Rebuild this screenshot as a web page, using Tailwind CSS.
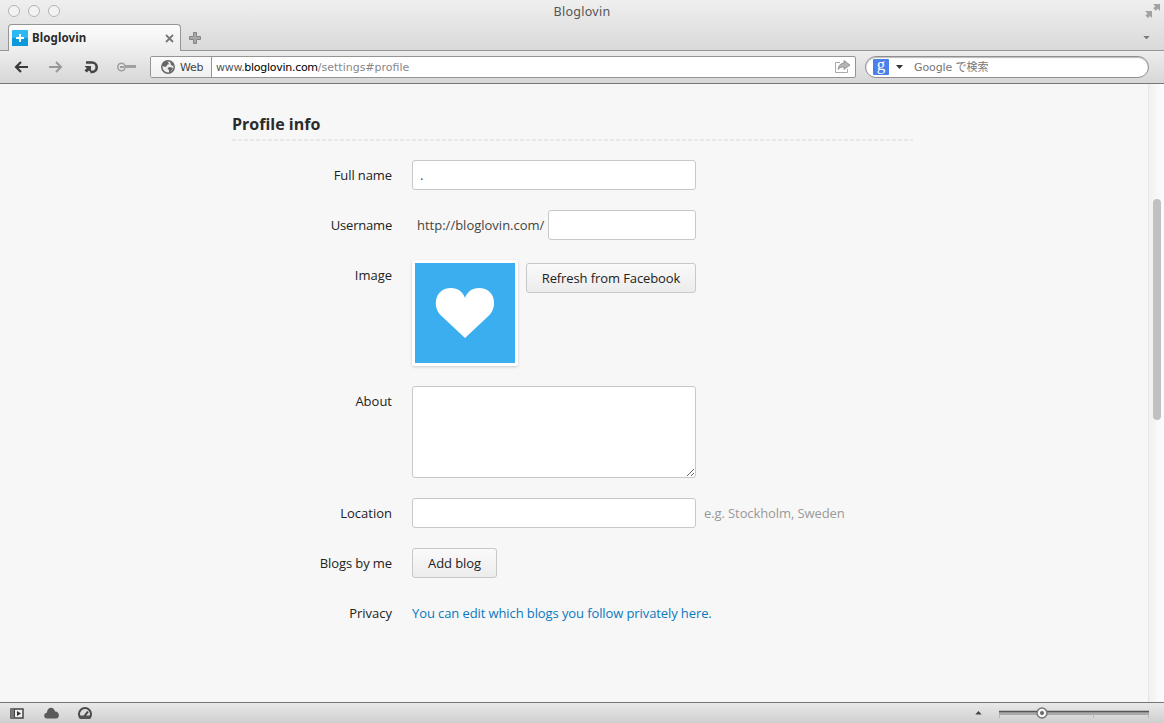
<!DOCTYPE html>
<html lang="en">
<head>
  <meta charset="UTF-8">
  <meta name="viewport" content="width=device-width, initial-scale=1.0">
  <title>Bloglovin</title>
  <script src="https://cdn.jsdelivr.net/npm/@tailwindcss/browser@4"></script>
</head>
<body class="h-screen overflow-hidden flex flex-col bg-[#f7f7f7] font-['Open_Sans',sans-serif] text-[13px] leading-[18px] text-[#222]">

  <!-- Title bar and tabs -->
  <header class="h-[51px] shrink-0 flex flex-col bg-linear-to-b from-[#efefef] to-[#d9d9d9] border-b border-[#969696] font-['DejaVu_Sans','Noto_Sans_CJK_JP',sans-serif] text-[11px]">
    <div class="h-6 shrink-0 flex items-start justify-between">
      <div class="w-24 flex gap-2 pl-2 pt-[5px]">
        <i class="size-3 rounded-full border border-[#b4b4b4] bg-[#f3f3f3]"></i>
        <i class="size-3 rounded-full border border-[#b4b4b4] bg-[#f3f3f3]"></i>
        <i class="size-3 rounded-full border border-[#b4b4b4] bg-[#f3f3f3]"></i>
      </div>
      <div class="pt-[3px] text-[12.500px] tracking-[0.280px] text-[#555] font-['Noto_Sans',sans-serif]">Bloglovin</div>
      <div class="w-24 flex justify-end pr-1 pt-1">
        <svg width="16" height="16" viewBox="0 0 16 16" fill="#a2a2a2"><path d="M9 0h7v7l-2.300-2.300-2 2-2.400-2.400 2-2zM1 7h7v7l-2-2-2 2-2.500-2.500 2-2z"/></svg>
      </div>
    </div>
    <div class="h-[27px] shrink-0 flex">
      <div class="ml-2 h-[27px] w-[173px] flex items-center px-[3px] rounded-t-[4px] border border-b-0 border-[#959595] bg-linear-to-b from-[#fcfcfc] to-[#ededed]">
        <svg width="16" height="16" viewBox="0 0 16 16"><rect width="16" height="16" rx="1" fill="#2cb8f2"/><path d="M0 8h16v8H0z" fill="#0c98dc"/><path d="M8 4v8M4 8h8" stroke="#fff" stroke-width="2"/></svg>
        <span class="ml-1 grow font-bold text-[#2b2b2b] font-['Noto_Sans',sans-serif] text-[11.500px] tracking-[0.100px]">Bloglovin</span>
        <svg class="mr-[3px]" width="9" height="9" viewBox="0 0 9 9" stroke="#777" stroke-width="1.800"><path d="M1 1l7 7M8 1L1 8"/></svg>
      </div>
      <svg class="ml-2 mt-[8px]" width="12" height="12" viewBox="0 0 12 12"><path d="M4.500.5h3v4h4v3h-4v4h-3v-4h-4v-3h4z" fill="#a8a8a8" stroke="#858585"/></svg>
      <svg class="ml-auto mr-3.5 mt-3" width="7" height="4" viewBox="0 0 8 5" fill="#777"><path d="M0 0h8L4 4z"/></svg>
    </div>
  </header>

  <!-- Toolbar -->
  <nav class="h-[33px] shrink-0 flex items-center bg-linear-to-b from-[#ededed] to-[#d7d7d7] border-b border-[#777] font-['DejaVu_Sans','Noto_Sans_CJK_JP',sans-serif] text-[11px] text-[#444]">
    <svg class="ml-3.5" width="15" height="14" viewBox="0 0 15 14" fill="none" stroke="#3a3a3a" stroke-width="2.200"><path d="M7 2L2 7l5 5M2 7h12"/></svg>
    <svg class="ml-[19px]" width="15" height="14" viewBox="0 0 15 14" fill="none" stroke="#999" stroke-width="2"><path d="M8 2l5 5-5 5M13 7H1"/></svg>
    <svg class="ml-[21px]" width="15" height="14" viewBox="0 0 15 14"><path d="M2 2.500h6a4.700 4.700 0 0 1 0 9.400H6.500" fill="none" stroke="#444" stroke-width="2.600"/><path d="M.5 6h6.500v6.500L4.900 10.400 2.700 12.600.5 10.400l2.200-2.200z" fill="#444"/></svg>
    <svg class="ml-[18px]" width="19" height="10" viewBox="0 0 19 10" fill="none" stroke="#a0a0a0"><circle cx="4.500" cy="5" r="3.700" stroke-width="1.600"/><path d="M3 5h4" stroke-width="2"/><path d="M8 4.500h11" stroke-width="3"/></svg>
    <div class="ml-3.5 h-[22px] w-[706px] flex items-center rounded-[2px] border border-[#959595] bg-white">
      <div class="h-full w-[61px] flex items-center gap-[5px] pl-[10px] border-r border-[#959595] bg-linear-to-b from-[#fcfcfc] to-[#f0f0f0]">
        <svg class="shrink-0" width="14" height="14" viewBox="0 0 14 14"><circle cx="7" cy="7" r="6.200" fill="#eee" stroke="#666" stroke-width="1.500"/><path d="M2 3l3-2 2 1 1 2-2 1-1 2-2-.5L1 6zM8 7l3 .5 1 1-3 4H8V10L6.500 8.500zM9 1l3 3v2l-2-1z" fill="#666"/></svg>
        <span class="pt-px tracking-[-0.200px]">Web</span>
      </div>
      <div class="grow pl-1 pt-px text-[#888]"><span class="tracking-[-0.280px]"><span class="text-[#555]">www.</span><span class="text-black">bloglovin.com</span></span>/settings#profile</div>
      <svg class="mr-1" width="17" height="14" viewBox="0 0 17 14"><path d="M6 2.500H1.500v10h12V9" fill="none" stroke="#aaa"/><path d="M10 .5l6 4.500-6 4.500V7C7.500 6.800 6 7.500 4 9.500 4.500 5.500 6.500 3.300 10 3z" fill="#b4b4b4" stroke="#8a8a8a" stroke-width=".8"/></svg>
    </div>
    <div class="ml-[9px] h-[22px] w-[284px] flex items-center pl-[7px] rounded-full border border-[#8f8f8f] bg-white shadow-[inset_0_1px_1px_#bbb]">
      <div class="size-4 rounded-[1px] bg-[#4a80ea] text-white text-center font-['Liberation_Serif',serif] text-[17px] leading-[12px]">g</div>
      <svg class="ml-[7px]" width="7" height="4" viewBox="0 0 7 4" fill="#333"><path d="M0 0h7L3.500 4z"/></svg>
      <span class="ml-[11px] pt-px tracking-[-0.100px] text-[#777]">Google で検索</span>
    </div>
  </nav>

  <!-- Page -->
  <div class="grow flex min-h-0">
    <main class="grow pl-[232px] pt-[30px]">
      <h2 class="h-[25px] text-[16px] leading-5 font-bold text-[#2b2b2b]">Profile info</h2>
      <div class="w-[681px] h-[2px] bg-[repeating-linear-gradient(90deg,#e8e8e8_0_4px,transparent_4px_6px)]"></div>
      <form class="mt-[19px] grid grid-cols-[160px_1fr] gap-x-5 gap-y-5 tracking-[-0.100px]">
        <label class="pt-1.5 text-right">Full name</label>
        <div><input type="text" value="." class="block w-[284px] h-[30px] px-[7px] rounded-[3px] border border-[#c8c8c8] bg-white text-[#444]"></div>

        <label class="pt-1.5 text-right tracking-[-0.200px]">Username</label>
        <div class="flex">
          <span class="w-[136px] pl-[5px] pt-1.5 tracking-normal text-[#444]">http://bloglovin.com/</span>
          <input type="text" class="w-[148px] h-[30px] px-[7px] rounded-[3px] border border-[#c8c8c8] bg-white">
        </div>

        <label class="pt-1.5 text-right tracking-normal">Image</label>
        <div class="h-[106px] flex items-start">
          <div class="size-[106px] p-[3px] rounded-[2px] bg-white shadow-[0_1px_3px_#0000002e]">
            <svg width="100" height="100" viewBox="0 0 100 100"><path d="M0 0h100v100H0z" fill="#3baef0"/><path d="M50 75L25.500 52C17 43 20 25 36 25c7 0 12 4 14 10 2-6 7-10 14-10 16 0 19 18 10.500 27z" fill="#fff"/></svg>
          </div>
          <button type="button" class="ml-2 mt-[3px] w-[170px] h-[30px] rounded-[3px] border border-[#c8c8c8] bg-linear-to-b from-[#fafafa] to-[#ececec] tracking-[-0.100px]">Refresh from Facebook</button>
        </div>

        <label class="pt-1.5 text-right tracking-normal">About</label>
        <div><textarea class="block w-[284px] h-[92px] rounded-[3px] border border-[#c8c8c8] bg-white"></textarea></div>

        <label class="pt-1.5 text-right tracking-normal">Location</label>
        <div class="flex">
          <input type="text" class="w-[284px] h-[30px] px-[7px] rounded-[3px] border border-[#c8c8c8] bg-white">
          <span class="pl-2 pt-1.5 text-[#999]">e.g. Stockholm, Sweden</span>
        </div>

        <label class="pt-1.5 text-right">Blogs by me</label>
        <div><button type="button" class="block w-[85px] h-[30px] rounded-[3px] border border-[#c8c8c8] bg-linear-to-b from-[#fafafa] to-[#ececec]">Add blog</button></div>

        <label class="pt-1.5 text-right tracking-normal">Privacy</label>
        <div class="pt-1.5"><a href="#" class="text-[#0a78c0]">You can edit which blogs you follow privately here.</a></div>
      </form>
    </main>
    <!-- Scrollbar -->
    <div class="w-4 shrink-0 pt-[115px] pl-1 border-l border-[#e6e6e6] bg-linear-to-r from-[#f1f1f1] to-[#fdfdfd]">
      <div class="w-2 h-[221px] rounded-full bg-[#c1c1c1]"></div>
    </div>
  </div>

  <!-- Status bar -->
  <footer class="h-[21px] shrink-0 flex items-center border-t border-[#777] bg-linear-to-b from-[#e9e9e9] to-[#cfcfcf]">
    <svg class="ml-2.5" width="14" height="11" viewBox="0 0 14 11"><path d="M1 1h12v9H1z" fill="#eee" stroke="#444" stroke-width="1.500"/><path d="M1 1h3v9H1z" fill="#777"/><path d="M4.500 1v9" stroke="#444"/><path d="M7 3l4 2.500L7 8z" fill="#333"/></svg>
    <svg class="ml-5" width="15" height="12" viewBox="0 0 15 12" fill="#5a5a5a"><path d="M3 11.500C-.7 11.500-.7 6 3 5.500 3-.7 10.500-.7 11 4.500c5 0 5 7 1 7z"/></svg>
    <svg class="ml-[19px]" width="14" height="12" viewBox="0 0 14 12"><path d="M2.500 11A6 6 0 1 1 11.500 11z" fill="#ddd" stroke="#4a4a4a" stroke-width="2"/><path d="M2 8.500h10V12H2z" fill="#555"/><path d="M6.500 9L10 4.500" stroke="#444" stroke-width="2"/></svg>
    <svg class="ml-auto" width="7" height="4" viewBox="0 0 8 5" fill="#444"><path d="M0 4.500L4 0l4 4.500z"/></svg>
    <svg class="ml-4 mr-3.5" width="152" height="14" viewBox="0 0 152 14"><path d="M1 6h150v3H1z" fill="#aaa"/><path d="M1 5.500h150" stroke="#555" stroke-width="1.500"/><path d="M1.500 9.500v2M95.500 9.500v2M150.500 9.500v2" stroke="#aaa"/><circle cx="44" cy="7" r="5" fill="#f4f4f4" stroke="#777" stroke-width="1.500"/><circle cx="44" cy="7" r="2" fill="#666"/></svg>
  </footer>
</body>
</html>
